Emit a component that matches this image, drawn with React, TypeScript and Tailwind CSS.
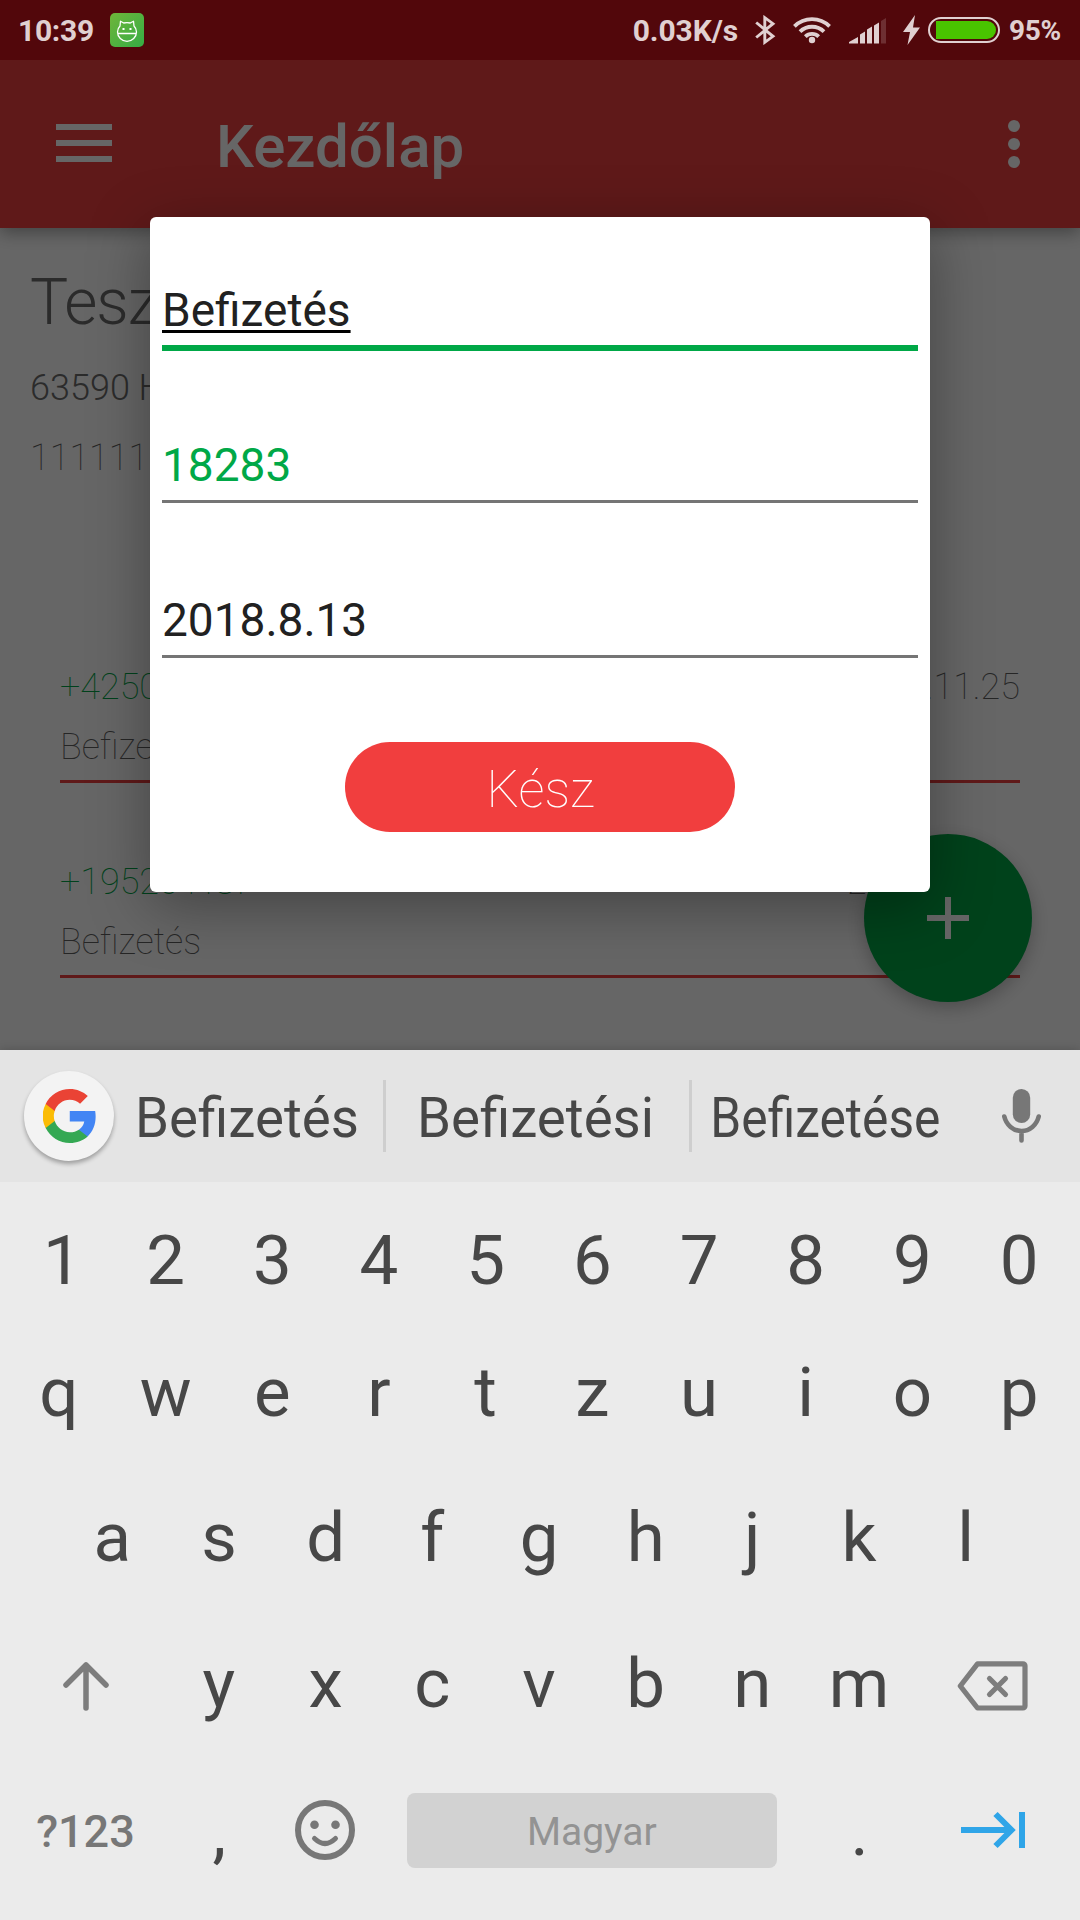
import React from 'react';

const numbers = ['1', '2', '3', '4', '5', '6', '7', '8', '9', '0'];
const topRow = ['q', 'w', 'e', 'r', 't', 'z', 'u', 'i', 'o', 'p'];
const homeRow = ['a', 's', 'd', 'f', 'g', 'h', 'j', 'k', 'l'];
const bottomRow = ['y', 'x', 'c', 'v', 'b', 'n', 'm'];

const transactions = [
  { amount: '+42500 HUF', label: 'Befizetés', date: '2018.11.25' },
  { amount: '+19520 HUF', label: 'Befizetés', date: '2018.11.11' },
];

function StatusBar() {
  return (
    <div className="relative z-20 flex h-[60px] items-center bg-[#52070b] text-[30px] leading-[60px] font-bold text-[#e0d0d1]">
      <span className="ml-[18px] w-[92px] pt-px tracking-[-0.3px] whitespace-nowrap">10:39</span>
      <svg className="h-[34px] w-[34px] shrink-0" viewBox="0 0 34 34" fill="none">
        <defs>
          <linearGradient id="app" x1="0" y1="0" x2="1" y2="1">
            <stop offset="0" stopColor="#6fb53a" />
            <stop offset="1" stopColor="#35ad45" />
          </linearGradient>
        </defs>
        <rect width="34" height="34" rx="5" fill="url(#app)" />
        <path
          d="M10 13L10.500 8.200l3.200 1.800q3.300-.8 6.600 0l3.200-1.800L24 13Q26.500 15.500 26.500 19A9.500 9.300 0 0 1 7.500 19Q7.500 15.500 10 13ZM7.500 20.500h19"
          stroke="#fff"
          strokeWidth="1.300"
          strokeLinejoin="round"
        />
        <rect x="12.500" y="15" width="2" height="2" fill="#fff" />
        <rect x="19.500" y="15" width="2" height="2" fill="#fff" />
      </svg>
      <span className="ml-auto pt-px tracking-[-0.100px] whitespace-nowrap">0.03K/s</span>
      <svg className="ml-[17px] h-[30px] w-[21px] shrink-0" viewBox="0 0 21 30" fill="none" stroke="currentColor" strokeWidth="2.900">
        <path d="M1.200 7.500L18 21.300 9.800 27.300V2.700L18 8.700 1.200 22.500" />
      </svg>
      <svg className="ml-[17px] h-[28px] w-[38px] shrink-0" viewBox="0 0 38 28" fill="none" stroke="currentColor" strokeWidth="3.800">
        <path d="M1.400 10.300a25 25 0 0 1 35.200 0M7 15.700a17 17 0 0 1 24 0M12.300 20.700a9.500 9.500 0 0 1 13.400 0" />
        <circle cx="19" cy="24" r="3.200" fill="currentColor" stroke="none" />
      </svg>
      <svg className="mt-[2px] ml-[18px] h-[26px] w-[37px] shrink-0" viewBox="0 0 37 26" fill="currentColor">
        <path d="M0 25.500v-1.500l9-5v6.500ZM11 25.500v-9l5-3v12ZM18 25.500v-14l5-3v17ZM25 25.500v-18l5-3v21Z" />
        <path d="M32 25.500V3l5-3v25.500Z" opacity=".2" />
      </svg>
      <svg className="ml-[17px] h-[30px] w-[17px] shrink-0" viewBox="0 0 17 30" fill="currentColor">
        <path d="M12 0L0 17h7L4.500 30 17 12.500h-7Z" />
      </svg>
      <div className="ml-[8px] h-[26px] w-[72px] shrink-0 rounded-full border-2 border-current pt-[2px] pr-[2px] pb-[2px] pl-[6px]">
        <div className="h-full w-full rounded-r-full rounded-l-[2px] bg-[#49c400]" />
      </div>
      <span className="mr-[18px] ml-[9px] w-[53px] pt-px text-[28px] tracking-[-0.300px] whitespace-nowrap">95%</span>
    </div>
  );
}

function AppBar() {
  return (
    <header className="relative flex h-[168px] items-center bg-[#ed3f3f] shadow-[0_5px_16px_rgba(0,0,0,0.35)]">
      <div className="mb-[2px] ml-[56px] flex w-[56px] flex-col gap-[10px]">
        <i className="h-[6px] bg-white" />
        <i className="h-[6px] bg-white" />
        <i className="h-[6px] bg-white" />
      </div>
      <h1 className="ml-[104px] pt-[5px] text-[60px] font-medium whitespace-nowrap text-white">Kezdőlap</h1>
      <div className="mr-[60px] ml-auto flex flex-col gap-[6px]">
        <i className="size-[12px] rounded-full bg-white" />
        <i className="size-[12px] rounded-full bg-white" />
        <i className="size-[12px] rounded-full bg-white" />
      </div>
    </header>
  );
}

function HomePage() {
  return (
    <main className="h-[822px] bg-white text-[#6c6c6c]">
      <section className="h-[402px] pt-[35px] pl-[30px]">
        <h2 className="h-[80px] text-[64px] leading-[80px] font-light tracking-[-1px]">Teszt</h2>
        <p className="mt-[21px] h-[48px] text-[36px] leading-[48px] font-light">63590 HUF</p>
        <p className="mt-[22px] h-[48px] text-[36px] leading-[48px] font-thin text-[#606060]">11111111</p>
      </section>
      <ul className="mx-[60px]">
        {transactions.map((t) => (
          <li key={t.date} className="mb-[42px] flex h-[153px] flex-col justify-end border-b-[3px] border-[#ed3f3f] pb-[3px] text-[36px] leading-[60px] font-thin text-[#606060]">
            <div className="flex justify-between">
              <span className="text-[#00a547]">{t.amount}</span>
              <span>{t.date}</span>
            </div>
            <span>{t.label}</span>
          </li>
        ))}
      </ul>
    </main>
  );
}

function AddButton() {
  return (
    <button className="absolute top-[834px] left-[864px] flex size-[168px] items-center justify-center rounded-full bg-[#00a545] shadow-[0_6px_18px_rgba(0,0,0,0.25)]">
      <svg className="size-[42px]" viewBox="0 0 42 42" fill="#fff">
        <path d="M18 0h6v18h18v6H24v18h-6V24H0v-6h18Z" />
      </svg>
    </button>
  );
}

function Dialog() {
  return (
    <div className="absolute top-[217px] left-[150px] flex h-[675px] w-[780px] flex-col rounded-[6px] bg-white px-[12px] text-[46px] text-[#212121] shadow-[0_14px_60px_rgba(0,0,0,0.35)]">
      <div className="h-[134px] border-b-[6px] border-[#00a847] pt-[63px] leading-[60px]">
        <span className="underline decoration-black decoration-[3px] underline-offset-[4px]">Befizetés</span>
      </div>
      <div className="h-[152px] border-b-[3px] border-[#757575] pt-[87px] leading-[54px] text-[#00a847]">18283</div>
      <div className="h-[155px] border-b-[3px] border-[#757575] pt-[90px] leading-[54px]">2018.8.13</div>
      <button className="mx-auto mt-[84px] flex h-[90px] w-[390px] items-center justify-center rounded-full bg-[#f13e3e] pt-[5px] pl-[1px] text-[51.500px] font-thin text-white">
        Kész
      </button>
    </div>
  );
}

function GoogleLogo() {
  return (
    <svg className="h-[54px] w-[53px]" viewBox="3.060 3 17.700 18">
      <path fill="#4285F4" d="M20.640 12.200c0-.638-.057-1.251-.164-1.840H12v3.481h4.844a4.140 4.140 0 0 1-1.796 2.716v2.258h2.908c1.702-1.567 2.684-3.874 2.684-6.615Z" />
      <path fill="#34A853" d="M12 21c2.430 0 4.467-.806 5.956-2.180l-2.908-2.259c-.806.540-1.837.860-3.048.860-2.344 0-4.328-1.584-5.036-3.711H3.957v2.332A8.997 8.997 0 0 0 12 21Z" />
      <path fill="#FBBC05" d="M6.964 13.710a5.410 5.410 0 0 1 0-3.420V7.958H3.957a8.996 8.996 0 0 0 0 8.084l3.007-2.332Z" />
      <path fill="#EA4335" d="M12 6.580c1.321 0 2.508.454 3.440 1.345l2.582-2.580C16.463 3.891 14.426 3 12 3a8.997 8.997 0 0 0-8.043 4.958l3.007 2.332C7.672 8.163 9.656 6.580 12 6.580Z" />
    </svg>
  );
}

function Suggestions() {
  return (
    <div className="flex h-[132px] items-center bg-[#e4e4e4] text-[54.600px] whitespace-nowrap text-[#474747]">
      <div className="ml-[24px] flex size-[90px] shrink-0 items-center justify-center rounded-full bg-[#f3f3f3] shadow-[0_3px_4px_rgba(0,0,0,0.3)]">
        <GoogleLogo />
      </div>
      <div className="flex w-[269px] shrink-0 justify-center pt-[6px] pr-[3px]">Befizetés</div>
      <i className="h-[72px] w-[3px] shrink-0 bg-[#cecece]" />
      <div className="flex w-[303px] shrink-0 justify-center pt-[6px] pr-[4px]">Befizetési</div>
      <i className="h-[72px] w-[3px] shrink-0 bg-[#cecece]" />
      <div className="flex w-[268px] shrink-0 justify-center pt-[6px] pr-[2px]">
        <span className="scale-x-[0.91]">Befizetése</span>
      </div>
      <svg className="ml-[42px] h-[54px] w-[39px] shrink-0" viewBox="0 0 39 54" fill="#777">
        <rect x="10.800" y="0" width="17.400" height="34" rx="8.700" />
        <path d="M2.300 27.500c2 8.500 9 14.500 17.200 14.500s15.200-6 17.200-14.500M19.500 42v9.500" fill="none" stroke="#777" strokeWidth="4.600" strokeLinecap="round" />
      </svg>
    </div>
  );
}

function Key({ children }: { children: React.ReactNode }) {
  return <button className="flex w-[106.700px] shrink-0 items-center justify-center">{children}</button>;
}

function Keyboard() {
  return (
    <div className="relative z-10 h-[870px] bg-[#ebebeb] text-[#474747] shadow-[0_0_10px_rgba(0,0,0,0.2)]">
      <Suggestions />
      <div className="flex flex-col pr-[2px] text-[69px] leading-[80px]">
        <div className="mt-[13px] flex h-[132px] justify-center">
          {numbers.map((k) => <Key key={k}>{k === '1' ? <span className="pl-[7px]">{k}</span> : k}</Key>)}
        </div>
        <div className="flex h-[132px] justify-center">
          {topRow.map((k) => <Key key={k}>{k}</Key>)}
        </div>
        <div className="mt-[6px] flex h-[146px] justify-center">
          {homeRow.map((k) => <Key key={k}>{k}</Key>)}
        </div>
        <div className="flex h-[145px] justify-center">
          <div className="flex w-[160px] items-center justify-center">
            <svg className="mt-[6px] h-[49px] w-[46px]" viewBox="0 0 46 49" fill="none" stroke="#7d7d7d" strokeWidth="5.500" strokeLinecap="round" strokeLinejoin="round">
              <path d="M23 46V3M3 23L23 3l20 20" />
            </svg>
          </div>
          {bottomRow.map((k) => <Key key={k}>{k}</Key>)}
          <div className="flex w-[160px] items-center justify-center">
            <svg className="mt-[5px] h-[50px] w-[71px]" viewBox="0 0 71 50" fill="none" stroke="#7d7d7d" strokeWidth="5.200" strokeLinejoin="round" strokeLinecap="round">
              <path d="M20.500 2.800H66a2 2 0 0 1 2 2V45a2 2 0 0 1-2 2H20.500L3.300 25Z" />
              <path d="M32.500 17.500l16 16M48.500 17.500l-16 16" />
            </svg>
          </div>
        </div>
        <div className="mt-px flex h-[147px] items-center justify-center">
          <div className="flex w-[160px] justify-center pt-[3px] text-[45px] font-medium text-[#777]">?123</div>
          <Key><span className="pt-[3px] pl-[1px]">,</span></Key>
          <Key>
            <svg className="mr-[1px] mb-[2px] size-[60px]" viewBox="0 0 60 60" fill="none" stroke="#777">
              <circle cx="30" cy="30" r="27" strokeWidth="6" />
              <circle cx="19.500" cy="24.700" r="4.300" fill="#777" stroke="none" />
              <circle cx="40.500" cy="24.700" r="4.300" fill="#777" stroke="none" />
              <path d="M19.500 38.500q10.500 10 21 0" strokeWidth="5" strokeLinecap="round" />
            </svg>
          </Key>
          <div className="flex w-[427px] shrink-0 justify-center">
            <button className="flex h-[75px] w-[370px] items-center justify-center rounded-[8px] bg-[#d2d2d2] pt-[3px] pr-[1px] text-[39px] text-[#939393]">Magyar</button>
          </div>
          <Key><span className="pt-[3px] pl-[1px]">.</span></Key>
          <div className="flex w-[160px] justify-center">
            <svg className="mb-[2px] h-[38px] w-[64px]" viewBox="0 0 64 38" fill="none" stroke="#2fa5e8" strokeWidth="6">
              <path d="M0 19h50M34.500 3l16 16-16 16M61 1v36" />
            </svg>
          </div>
        </div>
      </div>
    </div>
  );
}

export default function App() {
  return (
    <div className="relative h-[1920px] w-[1080px] overflow-hidden font-['Roboto',sans-serif]">
      <StatusBar />
      <AppBar />
      <HomePage />
      <AddButton />
      <div className="absolute inset-x-0 top-[60px] h-[990px] bg-black/60" />
      <Dialog />
      <Keyboard />
    </div>
  );
}
